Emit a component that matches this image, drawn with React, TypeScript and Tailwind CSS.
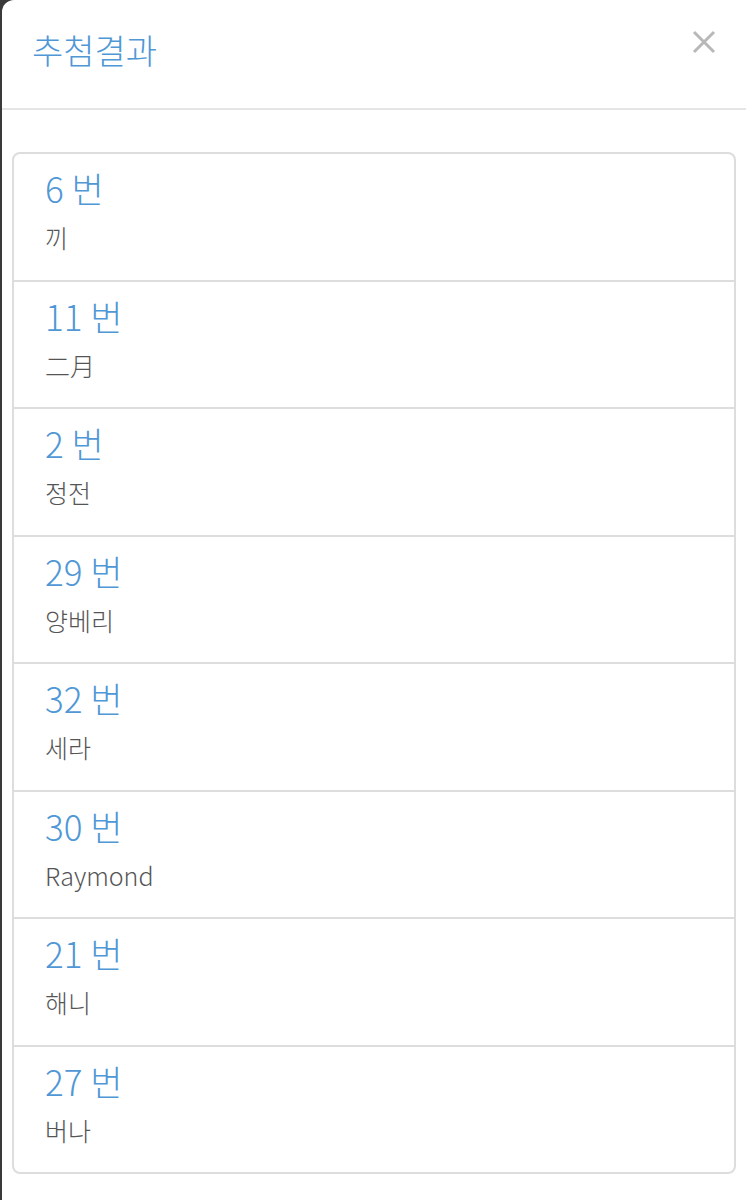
const results = [
  { no: 6, name: "끼" },
  { no: 11, name: "二月" },
  { no: 2, name: "정전" },
  { no: 29, name: "양베리" },
  { no: 32, name: "세라" },
  { no: 30, name: "Raymond" },
  { no: 21, name: "해니" },
  { no: 27, name: "버나" },
];

const font = {
  fontFamily: '"Noto Sans CJK KR", "Noto Sans", sans-serif',
};

export default function App() {
  return (
    <div className="min-h-[1200px] w-[746px] bg-[#3a3a3a] pl-[2px]" style={font}>
      <div className="min-h-[1200px] rounded-tl-[12px] bg-white">
        {/* modal header */}
        <div className="flex h-[110px] items-start justify-between border-b-2 border-[#e5e5e5] pl-[30px] pr-[27px] pt-[26px]">
          <h4 className="text-[34px] font-light leading-[48px] text-[#5097d6]">추첨결과</h4>
          <button className="mt-[1px] flex h-[30px] w-[30px] items-center justify-center">
            <svg width="24" height="24" viewBox="0 0 24 24" fill="none" stroke="#b8b8b8" strokeWidth="3">
              <path d="M2 2 L22 22 M22 2 L2 22" />
            </svg>
          </button>
        </div>

        {/* result list */}
        <div className="px-[10px] pt-[42px] pb-[28px]">
          <ul className="rounded-[8px] border-2 border-[#dddddd]">
            {results.map((r, i) => (
              <li
                key={i}
                className={
                  "pl-[31px] pt-[12px] pb-[24.5px] " +
                  (i < results.length - 1 ? "border-b-2 border-[#dddddd]" : "")
                }
              >
                <div className="text-[35px] font-light leading-[44px] text-[#5097d6]">{r.no} 번</div>
                <div className="mt-[9px] text-[25px] font-light leading-[36px] text-[#555555]">{r.name}</div>
              </li>
            ))}
          </ul>
        </div>
      </div>
    </div>
  );
}
